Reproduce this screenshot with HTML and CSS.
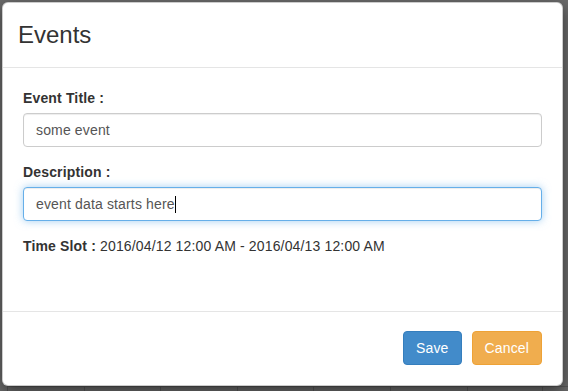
FILE: index.html
```html
<!DOCTYPE html>
<html lang="en">
<head>
<meta charset="UTF-8">
<title>Events</title>
<meta name="viewport" content="width=device-width,initial-scale=1.0">
<link rel="stylesheet" href="styles.css">
</head>
<body>
<div class="modal-content">
  <div class="modal-header">
    <h4 class="modal-title">Events</h4>
  </div>

  <div class="modal-body">
    <div class="form-group">
      <label for="eventTitle">Event Title :</label>
      <input id="eventTitle" class="form-control" type="text" value="some event">
    </div>

    <div class="form-group">
      <label>Description :</label>
      <div class="form-control focused">event data starts here<span class="caret"></span></div>
    </div>

    <div class="time-slot"><b>Time Slot :</b> 2016/04/12 12:00 AM - 2016/04/13 12:00 AM</div>
  </div>

  <div class="modal-footer">
    <button class="btn btn-primary">Save</button>
    <button class="btn btn-warning">Cancel</button>
  </div>
</div>

<div class="cal-row">
  <div></div><div></div><div></div><div></div><div></div><div></div><div></div>
</div>
</body>
</html>
```

FILE: styles.css
```css
*{box-sizing:border-box}
html,body{overflow:hidden}
body{
  margin:0;background:#6b6b6b;color:#333;
  font-family:"Liberation Sans",Arial,Helvetica,sans-serif;font-size:14px;line-height:20px;
  letter-spacing:.15px
}
.modal-content{
  width:561px;margin:2px 0 0 2px;background:#fff;
  border:1px solid rgba(0,0,0,.2);border-radius:6px;
  box-shadow:0 5px 15px rgba(0,0,0,.5);position:relative;z-index:1
}
.modal-header{padding:15px;border-bottom:1px solid #e5e5e5}
.modal-title{margin:0;font-size:24px;line-height:34px;font-weight:400;color:#333;letter-spacing:0}
.modal-body{padding:20px 20px 55px}
.form-group{margin-bottom:15px}
label{display:block;margin-bottom:5px;font-weight:700}
.form-control{
  display:block;width:100%;height:34px;padding:6px 12px;
  font:inherit;letter-spacing:inherit;color:#555;background:#fff;
  border:1px solid #ccc;border-radius:4px;
  box-shadow:inset 0 1px 1px rgba(0,0,0,.075)
}
.form-control.focused{
  border-color:#66afe9;
  box-shadow:inset 0 1px 1px rgba(0,0,0,.075),0 0 8px rgba(102,175,233,.6)
}
.caret{display:inline-block;width:1px;height:17px;background:#000;vertical-align:-4px}
.time-slot{color:#333}
.modal-footer{
  display:flex;justify-content:flex-end;gap:10px;
  padding:19px 20px 20px;border-top:1px solid #e5e5e5
}
.btn{
  height:34px;padding:6px 12px;font:inherit;letter-spacing:inherit;color:#fff;
  border:1px solid transparent;border-radius:4px;cursor:pointer
}
.btn-primary{background:#428bca;border-color:#357ebd}
.btn-warning{background:#f0ad4e;border-color:#eea236}
.cal-row{
  display:grid;grid-template-columns:repeat(7,76.6px);
  margin-left:7px;height:5px;border-top:1px solid #575757
}
.cal-row div{border-left:1px solid #575757}
.cal-row div:last-child{border-right:1px solid #575757}
```
